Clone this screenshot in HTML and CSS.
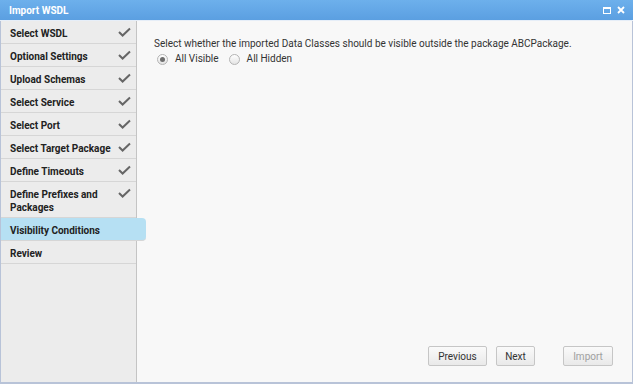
FILE: index.html
```html
<!DOCTYPE html>
<html lang="en">
<head>
  <meta charset="utf-8">
  <title>Import WSDL</title>
  <link rel="stylesheet" href="styles.css">
</head>
<body>
  <div class="window">
    <header class="titlebar">
      <span class="title">Import WSDL</span>
      <div class="tools">
        <svg class="tool" width="8" height="7" viewBox="0 0 8 7"><rect x="0.5" y="0.5" width="7" height="6" fill="none" stroke="#fff" stroke-width="1"/><rect x="0" y="0" width="8" height="2" fill="#fff"/></svg>
        <svg class="tool" width="8" height="8" viewBox="0 0 8 8"><path d="M1 1 L7 7 M7 1 L1 7" stroke="#fff" stroke-width="1.8"/></svg>
      </div>
    </header>
    <div class="body">
      <nav class="steps">
        <div class="step done">Select WSDL</div>
        <div class="step done">Optional Settings</div>
        <div class="step done">Upload Schemas</div>
        <div class="step done">Select Service</div>
        <div class="step done">Select Port</div>
        <div class="step done">Select Target Package</div>
        <div class="step done">Define Timeouts</div>
        <div class="step done">Define Prefixes and<br>Packages</div>
        <div class="step active">Visibility Conditions</div>
        <div class="step">Review</div>
      </nav>
      <main class="content">
        <p class="question">Select whether the imported Data Classes should be visible outside the package ABCPackage.</p>
        <div class="options">
          <label class="option"><span class="radio checked"></span>All Visible</label>
          <label class="option"><span class="radio"></span>All Hidden</label>
        </div>
        <div class="actions">
          <button class="button previous">Previous</button>
          <button class="button next">Next</button>
          <button class="button import" disabled>Import</button>
        </div>
      </main>
    </div>
  </div>
</body>
</html>
```

FILE: styles.css
```css
*, *::before, *::after {
  margin: 0;
  padding: 0;
  box-sizing: border-box;
}

body {
  width: 633px;
  height: 384px;
  background-color: #ffffff;
  font-family: "Roboto", sans-serif;
  font-size: 10px;
  color: #222222;
}

.window {
  display: flex;
  flex-direction: column;
  height: 384px;
  border: 1px solid #b8c3d8;
  border-top: none;
  border-bottom-width: 2px;
}

.titlebar {
  display: flex;
  align-items: center;
  justify-content: space-between;
  height: 21px;
  margin: 0 -1px;
  padding: 0 8px 0 9px;
  border-bottom: 1px solid #e6eef8;
  background: linear-gradient(#6db0ec, #5b9fe1);
  color: #ffffff;
}

.title {
  font-weight: 700;
  font-size: 10px;
}

.tools {
  display: flex;
  align-items: center;
  gap: 6px;
}

.body {
  flex: 1;
  display: flex;
  min-height: 0;
}

.steps {
  position: relative;
  flex-shrink: 0;
  width: 136px;
  background-color: #ececec;
  border-right: 1px solid #c4c4c4;
}

.step {
  position: relative;
  padding: 6px 10px 3px 9px;
  line-height: 13px;
  font-weight: 700;
  color: #222222;
  border-bottom: 1px solid #d6d6d6;
}

.step.done::after {
  content: "";
  position: absolute;
  top: 6px;
  right: 5px;
  width: 13px;
  height: 10px;
  background: url("data:image/svg+xml,%3Csvg xmlns='http://www.w3.org/2000/svg' width='13' height='10' viewBox='0 0 13 10'%3E%3Cpath d='M1 5 L4.6 8.5 L12 1.5' fill='none' stroke='%23666' stroke-width='2'/%3E%3C/svg%3E") no-repeat;
}

.step.active {
  width: 145px;
  border-radius: 0 4px 4px 0;
  background-color: #b6e0f3;
  z-index: 1;
}

.content {
  flex: 1;
  display: flex;
  flex-direction: column;
  padding: 16px 19px 16px 17px;
  background-color: #f8f8f8;
}

.question {
  line-height: 14px;
  color: #333333;
}

.options {
  display: flex;
  gap: 10px;
  margin-top: 1px;
  padding-left: 3px;
}

.option {
  display: flex;
  align-items: center;
  gap: 7px;
  line-height: 14px;
  color: #333333;
}

.radio {
  position: relative;
  width: 11px;
  height: 11px;
  border: 1px solid #b4b4b4;
  border-radius: 50%;
  background: linear-gradient(#ffffff, #e4e4e4);
}

.radio.checked::after {
  content: "";
  position: absolute;
  top: 2px;
  left: 2px;
  width: 5px;
  height: 5px;
  border-radius: 50%;
  background-color: #6e6e6e;
}

.actions {
  display: flex;
  justify-content: flex-end;
  margin-top: auto;
}

.button {
  height: 20px;
  padding: 0;
  border: 1px solid #c6c6c6;
  border-radius: 2px;
  background: linear-gradient(#fafafa, #e9e9e9);
  font-family: "Roboto", sans-serif;
  font-size: 10px;
  color: #333333;
}

.previous {
  width: 59px;
}

.next {
  width: 39px;
  margin-left: 9px;
}

.import {
  width: 50px;
  margin-left: 28px;
  color: #a0a0a0;
}
```
